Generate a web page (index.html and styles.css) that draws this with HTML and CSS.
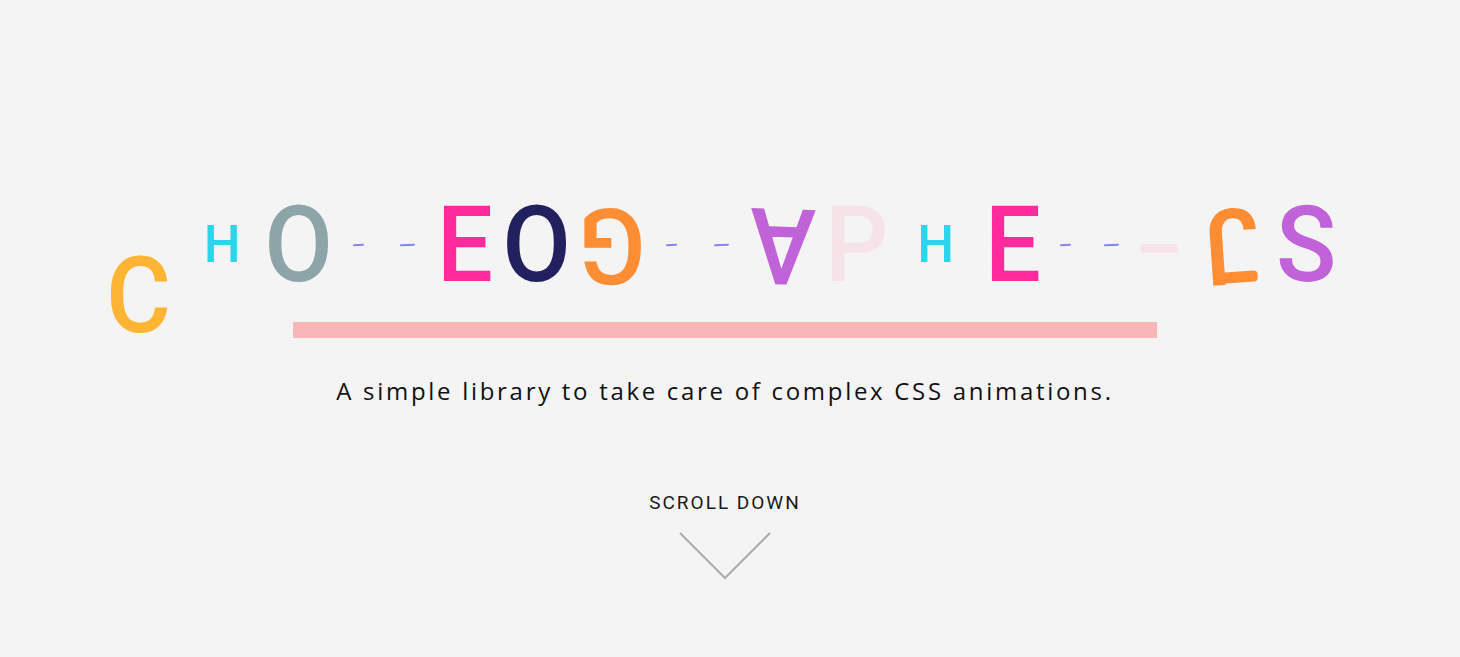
FILE: index.html
```html
<!DOCTYPE html>
<html lang="en">
<head>
<meta charset="utf-8">
<title>Choreographer-js</title>
<link rel="stylesheet" href="styles.css">
</head>
<body>
<main class="hero">
  <h1 class="title">
    <span class="cell w84"><span class="glyph big c-yellow drop">C</span></span>
    <span class="cell w82"><span class="glyph small c-cyan">H</span></span>
    <span class="cell w70"><span class="glyph big c-gray">O</span></span>
    <span class="cell w49"><span class="dash"></span></span>
    <span class="cell w48"><span class="dash long"></span></span>
    <span class="cell w66"><span class="glyph big c-pink">E</span></span>
    <span class="cell w79"><span class="glyph big c-navy">O</span></span>
    <span class="cell w70b"><span class="glyph big c-orange flip">G</span></span>
    <span class="cell w48b"><span class="dash"></span></span>
    <span class="cell w51"><span class="dash long"></span></span>
    <span class="cell w71"><span class="glyph big c-purple flip-a">A</span></span>
    <span class="cell w78"><span class="glyph big c-blush">P</span></span>
    <span class="cell w79b"><span class="glyph small c-cyan">H</span></span>
    <span class="cell w67"><span class="glyph big c-pink">E</span></span>
    <span class="cell w47"><span class="dash"></span></span>
    <span class="cell w45"><span class="dash long"></span></span>
    <span class="cell w61"><span class="hyphen"></span></span>
    <span class="cell w74"><span class="glyph big c-orange flip-j">J</span></span>
    <span class="cell w75"><span class="glyph big c-purple">S</span></span>
  </h1>
  <div class="bar"></div>
  <p class="tagline">A simple library to take care of complex CSS animations.</p>
  <p class="scroll">SCROLL DOWN</p>
  <svg class="chevron" width="92" height="48" viewBox="0 0 92 48" aria-hidden="true">
    <polyline points="1,1 46,46 91,1" fill="none" stroke="#ababab" stroke-width="2"/>
  </svg>
</main>
</body>
</html>
```
FILE: styles.css
```css
html, body {
  margin: 0;
  padding: 0;
  background: #f4f4f4;
}

body {
  font-family: Roboto, "Liberation Sans", sans-serif;
  color: #111;
}

.hero {
  display: flex;
  flex-direction: column;
  align-items: center;
  padding: 191px 10px 0 0;
}

.title {
  align-self: stretch;
  display: flex;
  align-items: center;
  margin: 0;
  padding-left: 97px;
  height: 107px;
  font-weight: 500;
}

.cell {
  display: flex;
  justify-content: center;
  align-items: center;
  height: 107px;
}

.w84 { width: 84px; }
.w82 { width: 82.5px; }
.w70 { width: 70px; }
.w49 { width: 49.5px; }
.w48 { width: 48.5px; }
.w66 { width: 66px; }
.w79 { width: 79px; }
.w70b { width: 70.25px; }
.w48b { width: 48.5px; }
.w51 { width: 51.5px; }
.w71 { width: 70.75px; }
.w78 { width: 78.5px; }
.w79b { width: 79.5px; }
.w67 { width: 66.75px; padding-left: 8px; box-sizing: border-box; }
.w47 { width: 46.75px; }
.w45 { width: 44.75px; }
.w61 { width: 61px; padding-right: 10px; box-sizing: border-box; }
.w74 { width: 74px; }
.w75 { width: 75.5px; }

.glyph {
  display: block;
  line-height: 1;
}

.big {
  font-size: 106px;
  transform: scaleX(0.94);
}
.small { font-size: 52px; }

.big.drop { transform: translateY(51px) scaleX(0.94); }
.big.flip { transform: rotate(180deg) scaleX(0.94); }
.big.flip-a { transform: rotate(182deg) scaleX(0.94); }
.big.flip-j {
  position: relative;
  transform: rotate(176deg) scaleX(0.94);
}

.flip-j::after {
  content: "";
  position: absolute;
  top: 15px;
  right: 9px;
  width: 46px;
  height: 11px;
  border-radius: 4px;
  background: currentColor;
}

.c-yellow { color: #ffb433; }
.c-cyan { color: #2ed4ec; }
.c-gray { color: #8da5a8; }
.c-pink { color: #ff2a9b; }
.c-navy { color: #23205f; }
.c-orange { color: #ff8d33; }
.c-purple { color: #c062d8; }
.c-blush { color: #f6e3e8; }

.dash {
  display: block;
  width: 11px;
  height: 2px;
  border-radius: 1px;
  background: #8484f0;
  transform: skewY(-3deg);
}

.dash.long { width: 15px; }

.hyphen {
  display: block;
  width: 38px;
  height: 9px;
  border-radius: 4px;
  background: #f6e3e8;
  transform: translateY(4px);
}

.bar {
  width: 864px;
  height: 16px;
  margin-top: 24px;
  background: #f8b6b6;
}

.tagline {
  margin: 39px 0 0;
  font-family: "Open Sans", Roboto, sans-serif;
  font-size: 24px;
  line-height: 1.2;
  letter-spacing: 2.7px;
  color: #111;
}

.scroll {
  margin: 86px 0 0;
  font-size: 19px;
  line-height: 1.2;
  letter-spacing: 2px;
  color: #1a1a1a;
}

.chevron {
  display: block;
  margin-top: 17px;
}
```
